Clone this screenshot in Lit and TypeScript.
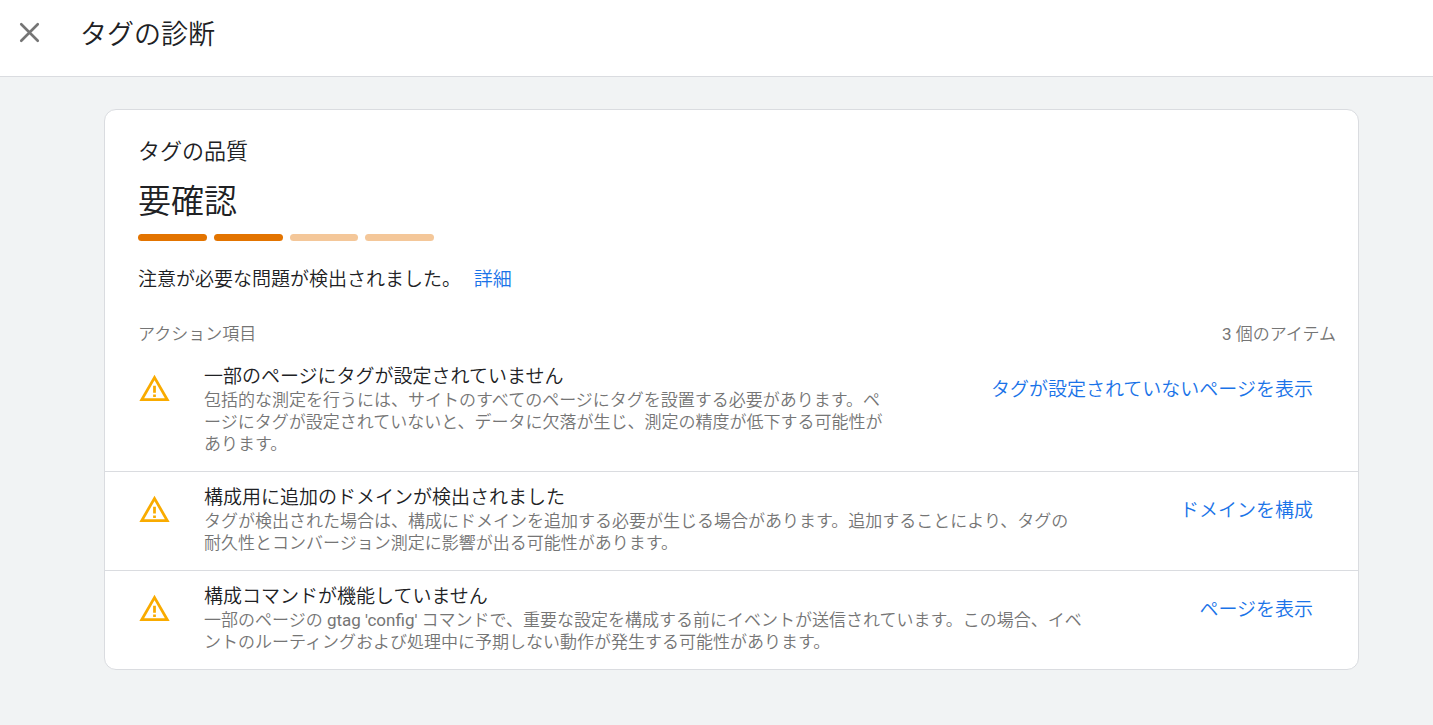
import { LitElement, html, css } from "lit";
import { customElement, property } from "lit/decorators.js";

interface ActionItem {
  title: string;
  description: string;
  action: string;
}

const ITEMS: ActionItem[] = [
  {
    title: "一部のページにタグが設定されていません",
    description:
      "包括的な測定を行うには、サイトのすべてのページにタグを設置する必要があります。ページにタグが設定されていないと、データに欠落が生じ、測定の精度が低下する可能性があります。",
    action: "タグが設定されていないページを表示",
  },
  {
    title: "構成用に追加のドメインが検出されました",
    description:
      "タグが検出された場合は、構成にドメインを追加する必要が生じる場合があります。追加することにより、タグの耐久性とコンバージョン測定に影響が出る可能性があります。",
    action: "ドメインを構成",
  },
  {
    title: "構成コマンドが機能していません",
    description:
      "一部のページの gtag 'config' コマンドで、重要な設定を構成する前にイベントが送信されています。この場合、イベントのルーティングおよび処理中に予期しない動作が発生する可能性があります。",
    action: "ページを表示",
  },
];

@customElement("quality-meter")
class QualityMeter extends LitElement {
  @property({ type: Number }) level = 0;
  @property({ type: Number }) max = 4;

  static styles = css`
    :host {
      display: block;
    }
    .meter {
      display: flex;
      gap: 7px;
      max-width: 296px;
    }
    .segment {
      flex: 1;
      height: 7px;
      border-radius: 4px;
      background: #f4c799;
    }
    .filled {
      background: #e37400;
    }
  `;

  render() {
    return html`<div class="meter">
      ${Array.from(
        { length: this.max },
        (_, i) => html`<span class="segment ${i < this.level ? "filled" : ""}"></span>`
      )}
    </div>`;
  }
}

@customElement("action-item")
class ActionItemRow extends LitElement {
  @property({ attribute: false }) item!: ActionItem;

  static styles = css`
    :host {
      display: block;
    }
    .row {
      display: flex;
      align-items: flex-start;
      padding: 14px 45px 16px 33px;
    }
    .icon {
      flex: none;
      width: 33px;
      height: 33px;
      margin-top: 7px;
      fill: #f9ab00;
    }
    .text {
      flex: 1;
      min-width: 0;
      margin: 0 103px 0 33px;
    }
    .title {
      margin: 0;
      font-size: 19px;
      font-weight: inherit;
      line-height: 24px;
      color: #202124;
    }
    .description {
      margin: 0;
      font-size: 17px;
      line-height: 22px;
      color: #757575;
    }
    .action {
      flex: none;
      margin: 13px 0 0;
      padding: 0;
      border: 0;
      background: none;
      font: inherit;
      font-size: 19px;
      line-height: 24px;
      color: #1a73e8;
      cursor: pointer;
    }
  `;

  render() {
    return html`<div class="row">
      <svg class="icon" viewBox="0 0 24 24" aria-hidden="true">
        <path
          d="M12 5.99 19.53 19H4.47L12 5.99M12 2 1 21h22L12 2zm1 14.3h-2v1.8h2v-1.8zm0-6.3h-2v5h2v-5z"
        />
      </svg>
      <div class="text">
        <h3 class="title">${this.item.title}</h3>
        <p class="description">${this.item.description}</p>
      </div>
      <button class="action" type="button">${this.item.action}</button>
    </div>`;
  }
}

@customElement("app-root")
class AppRoot extends LitElement {
  static styles = css`
    :host {
      display: block;
      min-height: 100vh;
      background: #f1f3f4;
      color: #202124;
      font-family: Roboto, "Noto Sans CJK JP DemiLight", "Noto Sans CJK JP", sans-serif;
      font-weight: 400;
    }
    .header {
      display: flex;
      align-items: center;
      gap: 34px;
      padding: 10px 13px 22px;
      background: #fff;
      border-bottom: 1px solid #dadce0;
    }
    .close {
      display: flex;
      padding: 0;
      border: 0;
      background: none;
      cursor: pointer;
    }
    .close-icon {
      width: 33px;
      height: 33px;
      fill: none;
      stroke: #757575;
      stroke-width: 1.9;
      stroke-linecap: round;
    }
    .page-title {
      margin: 0;
      padding-top: 6px;
      font-size: 27px;
      font-weight: inherit;
      line-height: 38px;
    }
    .main {
      padding: 32px 74px 56px 104px;
    }
    .card {
      background: #fff;
      border: 1px solid #dadce0;
      border-radius: 12px;
    }
    .summary {
      padding: 26px 22px 0 33px;
    }
    .label {
      margin: 0;
      font-size: 22px;
      font-weight: inherit;
      line-height: 32px;
    }
    .status {
      margin: 10px 0 8px;
      font-size: 33px;
      line-height: 48px;
    }
    .message {
      margin: 25px 0 0;
      font-size: 19px;
      line-height: 28px;
    }
    .link {
      margin-left: 8px;
      color: #1a73e8;
      text-decoration: none;
    }
    .list-head {
      display: flex;
      justify-content: space-between;
      margin-top: 28px;
      font-size: 17px;
      line-height: 24px;
      color: #757575;
    }
    .list {
      margin: 5px 0 0;
      padding: 0;
      list-style: none;
    }
    .entry + .entry {
      border-top: 1px solid #dadce0;
    }
  `;

  render() {
    return html`
      <header class="header">
        <button class="close" type="button" aria-label="閉じる">
          <svg class="close-icon" viewBox="0 0 24 24" aria-hidden="true">
            <path d="M6 6 18 18M18 6 6 18" />
          </svg>
        </button>
        <h1 class="page-title">タグの診断</h1>
      </header>
      <main class="main">
        <section class="card">
          <div class="summary">
            <h2 class="label">タグの品質</h2>
            <p class="status">要確認</p>
            <quality-meter .level=${2}></quality-meter>
            <p class="message">
              注意が必要な問題が検出されました。 <a class="link" href="#">詳細</a>
            </p>
            <div class="list-head">
              <span>アクション項目</span>
              <span>${ITEMS.length} 個のアイテム</span>
            </div>
          </div>
          <ul class="list">
            ${ITEMS.map(
              (item) => html`<li class="entry"><action-item .item=${item}></action-item></li>`
            )}
          </ul>
        </section>
      </main>
    `;
  }
}
